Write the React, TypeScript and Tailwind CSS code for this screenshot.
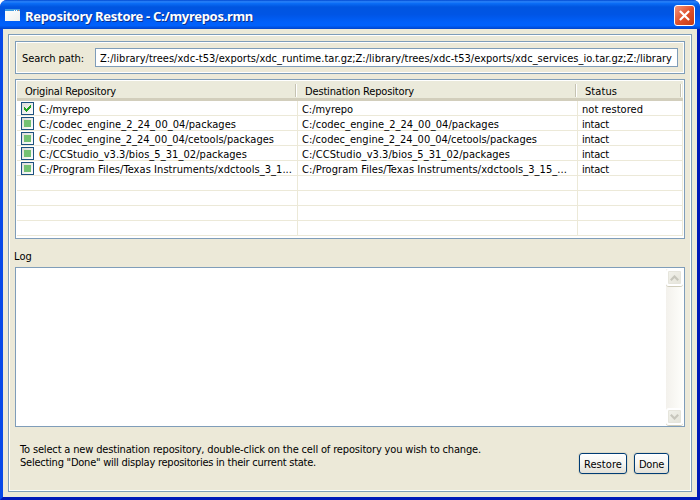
import { useLayoutEffect, useRef } from 'react';

type LabelProps = { text: string; width: number; className?: string };

/* Single-line label whose tracking is adjusted to fill the given width. */
function Label({ text, width, className = '' }: LabelProps) {
  const ref = useRef<HTMLSpanElement>(null);
  useLayoutEffect(() => {
    const el = ref.current;
    if (!el) return;
    el.style.letterSpacing = '0px';
    const natural = el.getBoundingClientRect().width;
    el.style.letterSpacing = `${(width - natural) / text.length}px`;
  }, [text, width]);
  return (
    <span className={`inline-flex shrink-0 items-start justify-start ${className}`}>
      <span ref={ref} className="shrink-0 whitespace-pre">
        {text}
      </span>
    </span>
  );
}

type Cell = [string, number];
const rows: { checked: boolean; cells: [Cell, Cell, Cell] }[] = [
  { checked: true, cells: [['C:/myrepo', 51], ['C:/myrepo', 51], ['not restored', 61]] },
  { checked: false, cells: [['C:/codec_engine_2_24_00_04/packages', 197], ['C:/codec_engine_2_24_00_04/packages', 197], ['intact', 27]] },
  { checked: false, cells: [['C:/codec_engine_2_24_00_04/cetools/packages', 235], ['C:/codec_engine_2_24_00_04/cetools/packages', 235], ['intact', 27]] },
  { checked: false, cells: [['C:/CCStudio_v3.3/bios_5_31_02/packages', 208], ['C:/CCStudio_v3.3/bios_5_31_02/packages', 208], ['intact', 27]] },
  { checked: false, cells: [['C:/Program Files/Texas Instruments/xdctools_3_1...', 253], ['C:/Program Files/Texas Instruments/xdctools_3_15_...', 265], ['intact', 27]] },
];

function CheckBox({ checked }: { checked: boolean }) {
  return (
    <span className="mt-px flex h-[13px] w-[13px] shrink-0 items-center justify-center border border-[#1c5180] bg-linear-to-br from-[#dcdcd7] to-white">
      {checked ? (
        <svg width="7" height="7" viewBox="0 0 7 7" fill="#21a121" shapeRendering="crispEdges">
          <path d="M0 2h1v1h1v1h1v-1h1v-1h1v-1h1v-1h1v3h-1v1h-1v1h-1v1h-1v1h-1v-1h-1v-1h-1z" />
        </svg>
      ) : (
        <span className="h-[7px] w-[7px] bg-[#73c173]" />
      )}
    </span>
  );
}

function ScrollButton({ down = false }: { down?: boolean }) {
  return (
    <div className="flex h-[17px] w-[17px] items-center justify-center rounded-[3px] border-2 border-white bg-linear-to-br from-[#f2f2ec] to-[#e5e4d9] shadow-[inset_0_0_0_1px_#e6e5dc,0_1px_0_#d0cdbb]">
      <svg width="9" height="6" viewBox="0 0 9 6" fill="none" stroke="#c7c6bc" strokeWidth="2.2">
        <path d={down ? 'M.8 .8L4.5 4.5L8.2 .8' : 'M.8 5.2L4.5 1.5L8.2 5.2'} />
      </svg>
    </div>
  );
}

function PushButton({ text, width, className }: { text: string; width: number; className: string }) {
  return (
    <button
      className={`flex h-[21px] justify-center rounded-[3px] border border-[#003c74] bg-linear-to-b from-white via-[#f5f5f1] to-[#e3e0d6] leading-[21px] shadow-[0_0_0_1px_#dedbc9] ${className}`}
    >
      <Label text={text} width={width} />
    </button>
  );
}

function HeaderCell({ text, width }: { text: string; width: number }) {
  return (
    <>
      <Label text={text} width={width} className="h-[17px] leading-[21px]" />
      <span className="mt-[3px] ml-auto h-[13px] w-[2px] border-r border-l border-r-white border-l-[#c5c2b2]" />
    </>
  );
}

export default function App() {
  return (
    <div className="h-[500px] w-[700px] overflow-hidden bg-white font-['DejaVu_Sans_Condensed','DejaVu_Sans',sans-serif] text-[11px] leading-[13px] text-black">
      <div className="flex h-full flex-col overflow-hidden rounded-t-[7px] bg-[#0831d9]">
        <header className="flex h-[29px] shrink-0 bg-linear-[to_bottom,#0048d0_0%,#2a83fa_6%,#0a6cf5_12%,#0055e0_24%,#0055e5_50%,#0060fb_78%,#0061fc_88%,#0044cc_100%] pl-[5px]">
          <div className="mt-[9px] flex h-[12px] w-[15px] flex-col bg-linear-to-br from-white to-[#eef0ee]">
            <div className="flex h-[2px] justify-end gap-px bg-[#3f9be0] pr-px">
              <span className="mt-px h-px w-px bg-white" />
              <span className="mt-px h-px w-px bg-white" />
              <span className="mt-px h-px w-px bg-[#e08050]" />
            </div>
          </div>
          <Label
            text="Repository Restore - C:/myrepos.rmn"
            width={228}
            className="ml-[5px] font-['Noto_Sans',sans-serif] text-[13px] leading-[32px] font-bold text-white [text-shadow:1px_1px_0_#0a2f8c]"
          />
          <button className="mt-[5px] mr-[5px] ml-auto flex h-[21px] w-[21px] items-center justify-center rounded-[3px] border border-white bg-linear-to-br from-[#f0937a] via-[#e0512c] to-[#c33a12]">
            <svg width="11" height="11" viewBox="0 0 12 12" stroke="white" strokeWidth="2.4">
              <path d="M1 1L11 11M11 1L1 11" />
            </svg>
          </button>
        </header>
        <div className="flex min-h-0 flex-1 border-x-[3px] border-b-[3px] border-r-[#0019b8] border-b-[#0019b8] border-l-[#0648e8]">
          <main className="flex flex-1 bg-[#ece9d8] px-[5px] pt-[5px] pb-[5px]">
            <div className="flex flex-1 flex-col border border-[#7f9db9] shadow-[inset_0_0_0_1px_white]">
              <section className="mt-[6px] ml-[6px] flex h-[33px] w-[670px] shrink-0 border border-[#7f9db9] pl-[6px] shadow-[inset_0_0_0_1px_white]">
                <Label text="Search path:" width={62} className="w-[73px] leading-[33px]" />
                <div className="mt-[6px] h-[19px] w-[583px] overflow-hidden border border-[#7f9db9] bg-white pl-[4px] leading-[19px]">
                  <Label
                    text="Z:/library/trees/xdc-t53/exports/xdc_runtime.tar.gz;Z:/library/trees/xdc-t53/exports/xdc_services_io.tar.gz;Z:/library"
                    width={572}
                  />
                </div>
              </section>
              <section className="mt-[5px] ml-[6px] flex h-[160px] w-[670px] shrink-0 flex-col border border-[#7f9db9] bg-white p-px">
                <div className="flex h-[20px] shrink-0 border-b-[3px] border-b-[#d2cebc] bg-[#ebeadb]">
                  <div className="flex w-[280px] pl-[8px]">
                    <HeaderCell text="Original Repository" width={91} />
                  </div>
                  <div className="flex w-[280px] pl-[8px]">
                    <HeaderCell text="Destination Repository" width={109} />
                  </div>
                  <div className="flex w-[105px] pl-[8px]">
                    <HeaderCell text="Status" width={32} />
                  </div>
                </div>
                <div className="flex-1">
                  {Array.from({ length: 9 }, (_, i) => {
                    const row = rows[i];
                    return (
                      <div key={i} className="flex h-[15px] w-[666px] border-b border-[#ece9d8] leading-[17px]">
                        <div className="flex w-[281px] items-start border-r border-[#ece9d8] pl-[4px]">
                          {row && (
                            <>
                              <CheckBox checked={row.checked} />
                              <Label text={row.cells[0][0]} width={row.cells[0][1]} className="ml-[5px]" />
                            </>
                          )}
                        </div>
                        <div className="flex w-[280px] items-start border-r border-[#ece9d8] pl-[4px]">
                          {row && <Label text={row.cells[1][0]} width={row.cells[1][1]} />}
                        </div>
                        <div className="flex w-[105px] items-start border-r border-[#ece9d8] pl-[4px]">
                          {row && <Label text={row.cells[2][0]} width={row.cells[2][1]} />}
                        </div>
                      </div>
                    );
                  })}
                </div>
              </section>
              <div className="mt-[11px] ml-[5px] flex leading-[13px]">
                <Label text="Log" width={18} />
              </div>
              <section className="mt-[4px] ml-[6px] flex h-[160px] w-[670px] shrink-0 justify-end border border-[#7f9db9] bg-white p-px">
                <div className="flex w-[17px] flex-col justify-between bg-linear-to-r from-[#f3f1ec] to-[#fefefb]">
                  <ScrollButton />
                  <ScrollButton down />
                </div>
              </section>
              <footer className="flex">
                <p className="mt-[16px] ml-[11px] flex flex-col items-start">
                  <Label
                    text="To select a new destination repository, double-click on the cell of repository you wish to change."
                    width={461}
                  />
                  <Label text={'Selecting "Done" will display repositories in their current state.'} width={296} />
                </p>
                <div className="mt-[26px] mr-[22px] ml-auto flex gap-[7px]">
                  <PushButton text="Restore" width={38} className="w-[48px]" />
                  <PushButton text="Done" width={25} className="w-[35px]" />
                </div>
              </footer>
            </div>
          </main>
        </div>
      </div>
    </div>
  );
}
